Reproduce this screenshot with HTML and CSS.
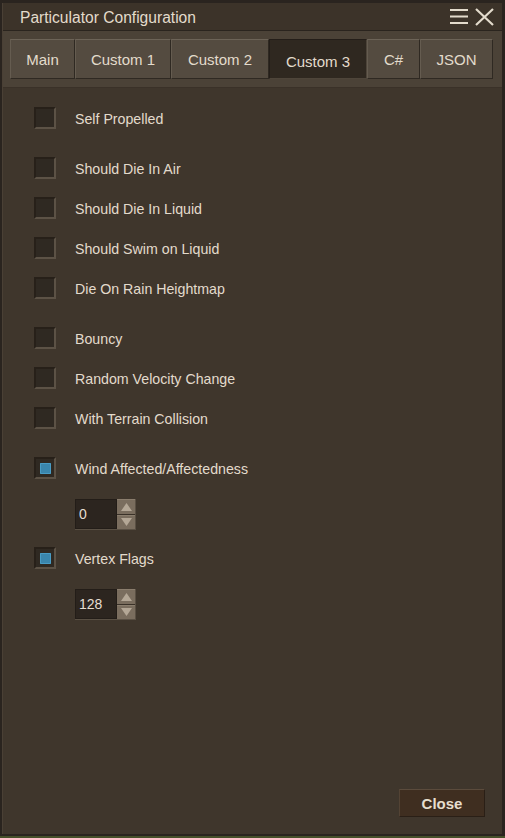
FILE: index.html
```html
<!DOCTYPE html>
<html>
<head>
<meta charset="utf-8">
<link rel="stylesheet" href="styles.css">
</head>
<body>
<div class="window">
  <div class="titlebar">
    <span class="title">Particulator Configuration</span>
    <div class="title-icons">
      <svg width="19" height="18" viewBox="0 0 19 18"><path d="M0 2h18M0 8.5h18M0 15h18" stroke="#e3dbcc" stroke-width="2.2" fill="none"/></svg>
      <svg width="19" height="18" viewBox="0 0 19 18"><path d="M1 1l17 16M18 1L1 17" stroke="#e3dbcc" stroke-width="2.2" fill="none"/></svg>
    </div>
  </div>
  <div class="tabbar">
    <div class="tab t-main">Main</div>
    <div class="tab t-c1">Custom 1</div>
    <div class="tab t-c2">Custom 2</div>
    <div class="tab t-c3 active">Custom 3</div>
    <div class="tab t-cs">C#</div>
    <div class="tab t-json">JSON</div>
  </div>
  <div class="content">
    <div class="group">
      <div class="row"><span class="cb"></span><span class="lbl">Self Propelled</span></div>
    </div>
    <div class="group">
      <div class="row"><span class="cb"></span><span class="lbl">Should Die In Air</span></div>
      <div class="row"><span class="cb"></span><span class="lbl">Should Die In Liquid</span></div>
      <div class="row"><span class="cb"></span><span class="lbl">Should Swim on Liquid</span></div>
      <div class="row"><span class="cb"></span><span class="lbl">Die On Rain Heightmap</span></div>
    </div>
    <div class="group">
      <div class="row"><span class="cb"></span><span class="lbl">Bouncy</span></div>
      <div class="row"><span class="cb"></span><span class="lbl">Random Velocity Change</span></div>
      <div class="row"><span class="cb"></span><span class="lbl">With Terrain Collision</span></div>
    </div>
    <div class="group">
      <div class="row"><span class="cb checked"></span><span class="lbl">Wind Affected/Affectedness</span></div>
      <div class="spin-row">
        <div class="spin">
          <span class="spin-val">0</span>
          <div class="spin-btns">
            <span class="sb"><svg width="17" height="14" viewBox="0 0 17 14"><path d="M3 11h11L8.5 3z" fill="#b4a796"/></svg></span>
            <span class="sb"><svg width="17" height="14" viewBox="0 0 17 14"><path d="M3 3h11l-5.5 8z" fill="#b4a796"/></svg></span>
          </div>
        </div>
      </div>
      <div class="row"><span class="cb checked"></span><span class="lbl">Vertex Flags</span></div>
      <div class="spin-row">
        <div class="spin">
          <span class="spin-val">128</span>
          <div class="spin-btns">
            <span class="sb"><svg width="17" height="14" viewBox="0 0 17 14"><path d="M3 11h11L8.5 3z" fill="#b4a796"/></svg></span>
            <span class="sb"><svg width="17" height="14" viewBox="0 0 17 14"><path d="M3 3h11l-5.5 8z" fill="#b4a796"/></svg></span>
          </div>
        </div>
      </div>
    </div>
    <div class="footer">
      <button class="close-btn">Close</button>
    </div>
  </div>
</div>
<div class="strip"></div>
</body>
</html>
```
FILE: styles.css
```css
* { box-sizing: border-box; }
html, body { margin: 0; padding: 0; }
body {
  width: 505px;
  height: 838px;
  background: #2a241f;
  font-family: "Liberation Sans", Arial, sans-serif;
  color: #e3dbcc;
  overflow: hidden;
}
.window {
  margin: 3px 3px 0 2px;
  height: 831px;
  display: flex;
  flex-direction: column;
  background: #3f362c;
  border-left: 1px solid #4a4035;
}
.titlebar {
  height: 28px;
  display: flex;
  align-items: center;
  justify-content: space-between;
  padding: 0 8px 0 17px;
  background: #3c3329;
  border-bottom: 1px solid #2a241e;
}
.title {
  font-size: 15.6px;
  color: #e3dbcc;
  padding-top: 2px;
}
.title-icons {
  display: flex;
  gap: 6px;
  align-items: center;
  padding-top: 1px;
}
.tabbar {
  display: flex;
  background: #4b4237;
  padding: 8px 7px 8px 7px;
  border-bottom: 1px solid #3a3128;
}
.tab {
  height: 40px;
  display: flex;
  align-items: center;
  justify-content: center;
  font-size: 15px;
  color: #e3dbcc;
  background: #544b40;
  border-top: 1px solid #6c6357;
  border-left: 1px solid #655c50;
  border-right: 1px solid #2f2922;
  border-bottom: 1px solid #2f2922;
}
.tab.active {
  background: #2f2820;
  border-top-color: #241e19;
  border-left-color: #241e19;
  border-right-color: #4e453a;
  border-bottom-color: #4e453a;
  padding-top: 4px;
}
.t-main { width: 65px; }
.t-c1 { width: 96px; }
.t-c2 { width: 98px; }
.t-c3 { width: 98px; }
.t-cs { width: 53px; }
.t-json { width: 73px; }
.content {
  flex: 1;
  display: flex;
  flex-direction: column;
  padding: 10px 0 0 31px;
  gap: 10px;
}
.group { display: flex; flex-direction: column; }
.row {
  height: 40px;
  display: flex;
  align-items: center;
  gap: 19px;
}
.cb {
  width: 22px;
  height: 22px;
  flex: none;
  background: #2f2922;
  border-top: 2px solid #272019;
  border-left: 2px solid #272019;
  border-right: 2px solid #5c5246;
  border-bottom: 2px solid #5c5246;
  display: flex;
  align-items: center;
  justify-content: center;
}
.cb.checked::after {
  content: "";
  width: 11px;
  height: 11px;
  background: #3a86ad;
  border-radius: 1px;
  box-shadow: inset 0 0 0 1px #4a9cc4;
}
.lbl {
  font-size: 14.2px;
  color: #e3dbcc;
  padding-top: 1px;
}
.spin-row {
  margin: 11px 0 9px 41px;
  height: 30px;
}
.spin {
  display: flex;
  width: 61px;
  height: 31px;
  border-bottom: 1px solid #5a5044;
  border-right: 1px solid #5a5044;
}
.spin-val {
  width: 42px;
  height: 30px;
  background: #2c251f;
  border: 1px solid #231d18;
  font-size: 14px;
  color: #e6ded2;
  display: flex;
  align-items: center;
  padding-left: 3px;
}
.spin-btns {
  display: flex;
  flex-direction: column;
  width: 18px;
  gap: 1px;
  background: #3a3128;
}
.sb {
  height: 14.5px;
  background: #7a6d5e;
  display: flex;
  align-items: center;
  justify-content: center;
  border-top: 1px solid #8a7d6d;
}
.sb svg { display: block; }
.footer {
  margin-top: auto;
  display: flex;
  justify-content: flex-end;
  padding: 0 17px 17px 0;
}
.close-btn {
  width: 86px;
  height: 28px;
  background: #3f2e20;
  border-top: 1px solid #5b4b3c;
  border-left: 1px solid #534334;
  border-right: 1px solid #2a1f16;
  border-bottom: 1px solid #2a1f16;
  font-family: "Liberation Sans", Arial, sans-serif;
  font-weight: bold;
  font-size: 15px;
  color: #e6dece;
  padding: 0;
}
.strip {
  height: 4px;
  border-top: 2px solid #2a241f;
  background: #46502a;
}
```
